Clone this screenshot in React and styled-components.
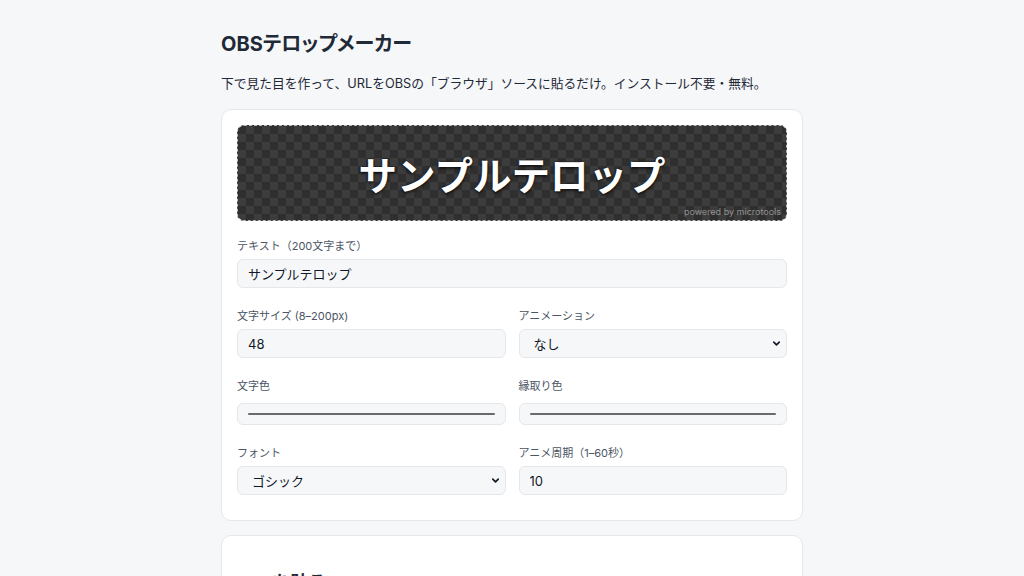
import React from 'react';
import styled, { createGlobalStyle } from 'styled-components';
import { ChevronDown } from 'lucide-react';

const GlobalStyle = createGlobalStyle`
  html, body {
    margin: 0;
    padding: 0;
    background: #f6f7f9;
  }
  body {
    font-family: Inter, "Noto Sans CJK JP", sans-serif;
    color: #111827;
  }
  * { box-sizing: border-box; }
`;

const App = () => {
  return (
    <>
      <GlobalStyle />
      <Page>
        <Title>OBSテロップメーカー</Title>
        <Lead>下で見た目を作って、URLをOBSの「ブラウザ」ソースに貼るだけ。インストール不要・無料。</Lead>

        <Card>
          <Preview>
            <Telop>サンプルテロップ</Telop>
            <Powered>powered by microtools</Powered>
          </Preview>

          <Field>
            <Label>テキスト（200文字まで）</Label>
            <TextInput defaultValue="サンプルテロップ" />
          </Field>

          <Grid>
            <Field>
              <Label>文字サイズ (8–200px)</Label>
              <TextInput defaultValue="48" />
            </Field>
            <Field>
              <Label>アニメーション</Label>
              <SelectWrap>
                <Select defaultValue="none">
                  <option value="none">なし</option>
                </Select>
                <Chevron size={11} strokeWidth={3.5} />
              </SelectWrap>
            </Field>

            <Field>
              <Label>文字色</Label>
              <ColorBox><ColorLine /></ColorBox>
            </Field>
            <Field>
              <Label>縁取り色</Label>
              <ColorBox><ColorLine /></ColorBox>
            </Field>

            <Field>
              <Label>フォント</Label>
              <SelectWrap>
                <Select defaultValue="gothic">
                  <option value="gothic">ゴシック</option>
                </Select>
                <Chevron size={11} strokeWidth={3.5} />
              </SelectWrap>
            </Field>
            <Field>
              <Label>アニメ周期（1–60秒）</Label>
              <TextInput defaultValue="10" />
            </Field>
          </Grid>
        </Card>

        <Card>
          <SectionTitle>URLを貼る</SectionTitle>
        </Card>
      </Page>
    </>
  );
};

// Styled components
const Page = styled.div`
  width: 582px;
  margin: 0 auto;
  padding-top: 30px;
  display: flex;
  flex-direction: column;
  gap: 14px;
`;

const Title = styled.h1`
  font-size: 20px;
  font-weight: 700;
  line-height: 28px;
  margin: 0 0 2px;
  color: #1f2937;
  font-feature-settings: "palt";
`;

const Lead = styled.p`
  font-size: 12.75px;
  line-height: 20px;
  margin: 0 0 1px;
  color: #1f2937;
`;

const Card = styled.section`
  background: #ffffff;
  border: 1px solid #e5e7eb;
  border-radius: 10px;
  padding: 15px 15px 25px;
  display: flex;
  flex-direction: column;
  gap: 18px;
`;

const Preview = styled.div`
  position: relative;
  height: 96px;
  padding-bottom: 1px;
  border: 1px dashed #b8bcc4;
  border-radius: 7px;
  background-color: #2f2f2f;
  background-image:
    linear-gradient(45deg, #3c3c3c 25%, transparent 25%, transparent 75%, #3c3c3c 75%),
    linear-gradient(45deg, #3c3c3c 25%, transparent 25%, transparent 75%, #3c3c3c 75%);
  background-size: 16px 16px;
  background-position: 0 0, 8px 8px;
  display: flex;
  align-items: center;
  justify-content: center;
`;

const Telop = styled.div`
  font-family: "Noto Sans CJK JP", sans-serif;
  font-size: 38.5px;
  font-weight: 700;
  color: #ffffff;
  text-shadow:
    0 0 2px rgba(0, 0, 0, 0.8),
    0 2px 3px rgba(0, 0, 0, 0.5);
`;

const Powered = styled.span`
  position: absolute;
  right: 5px;
  bottom: 3px;
  font-size: 9px;
  color: rgba(255, 255, 255, 0.45);
`;

const Field = styled.div`
  display: flex;
  flex-direction: column;
  gap: 6px;
`;

const Label = styled.label`
  font-size: 11px;
  line-height: 14px;
  color: #4b5563;
`;

const inputBase = `
  width: 100%;
  height: 29px;
  border: 1px solid #e5e7eb;
  border-radius: 6px;
  background: #f6f7f9;
  padding: 0 10px;
  font-family: Inter, "Noto Sans CJK JP", sans-serif;
  font-size: 13px;
  color: #111827;
  outline: none;
`;

const TextInput = styled.input`
  ${inputBase}
`;

const SelectWrap = styled.div`
  position: relative;
`;

const Select = styled.select`
  ${inputBase}
  appearance: none;
  padding-left: 14px;
`;

const Chevron = styled(ChevronDown)`
  position: absolute;
  right: 5px;
  top: 9px;
  color: #111827;
  pointer-events: none;
`;

const ColorBox = styled.div`
  height: 22px;
  margin-top: 4px;
  border: 1px solid #e5e7eb;
  border-radius: 6px;
  background: #f6f7f9;
  padding: 0 10px;
  display: flex;
  align-items: center;
`;

const ColorLine = styled.div`
  flex: 1;
  height: 2px;
  background: #6b6b6b;
  border-radius: 1px;
`;

const Grid = styled.div`
  display: grid;
  grid-template-columns: 1fr 1fr;
  column-gap: 13px;
  row-gap: 21px;
  margin-top: 3px;
`;

const SectionTitle = styled.h2`
  font-size: 18px;
  font-weight: 700;
  margin: 17px 0 0;
  color: #1f2937;
`;

export default App;
